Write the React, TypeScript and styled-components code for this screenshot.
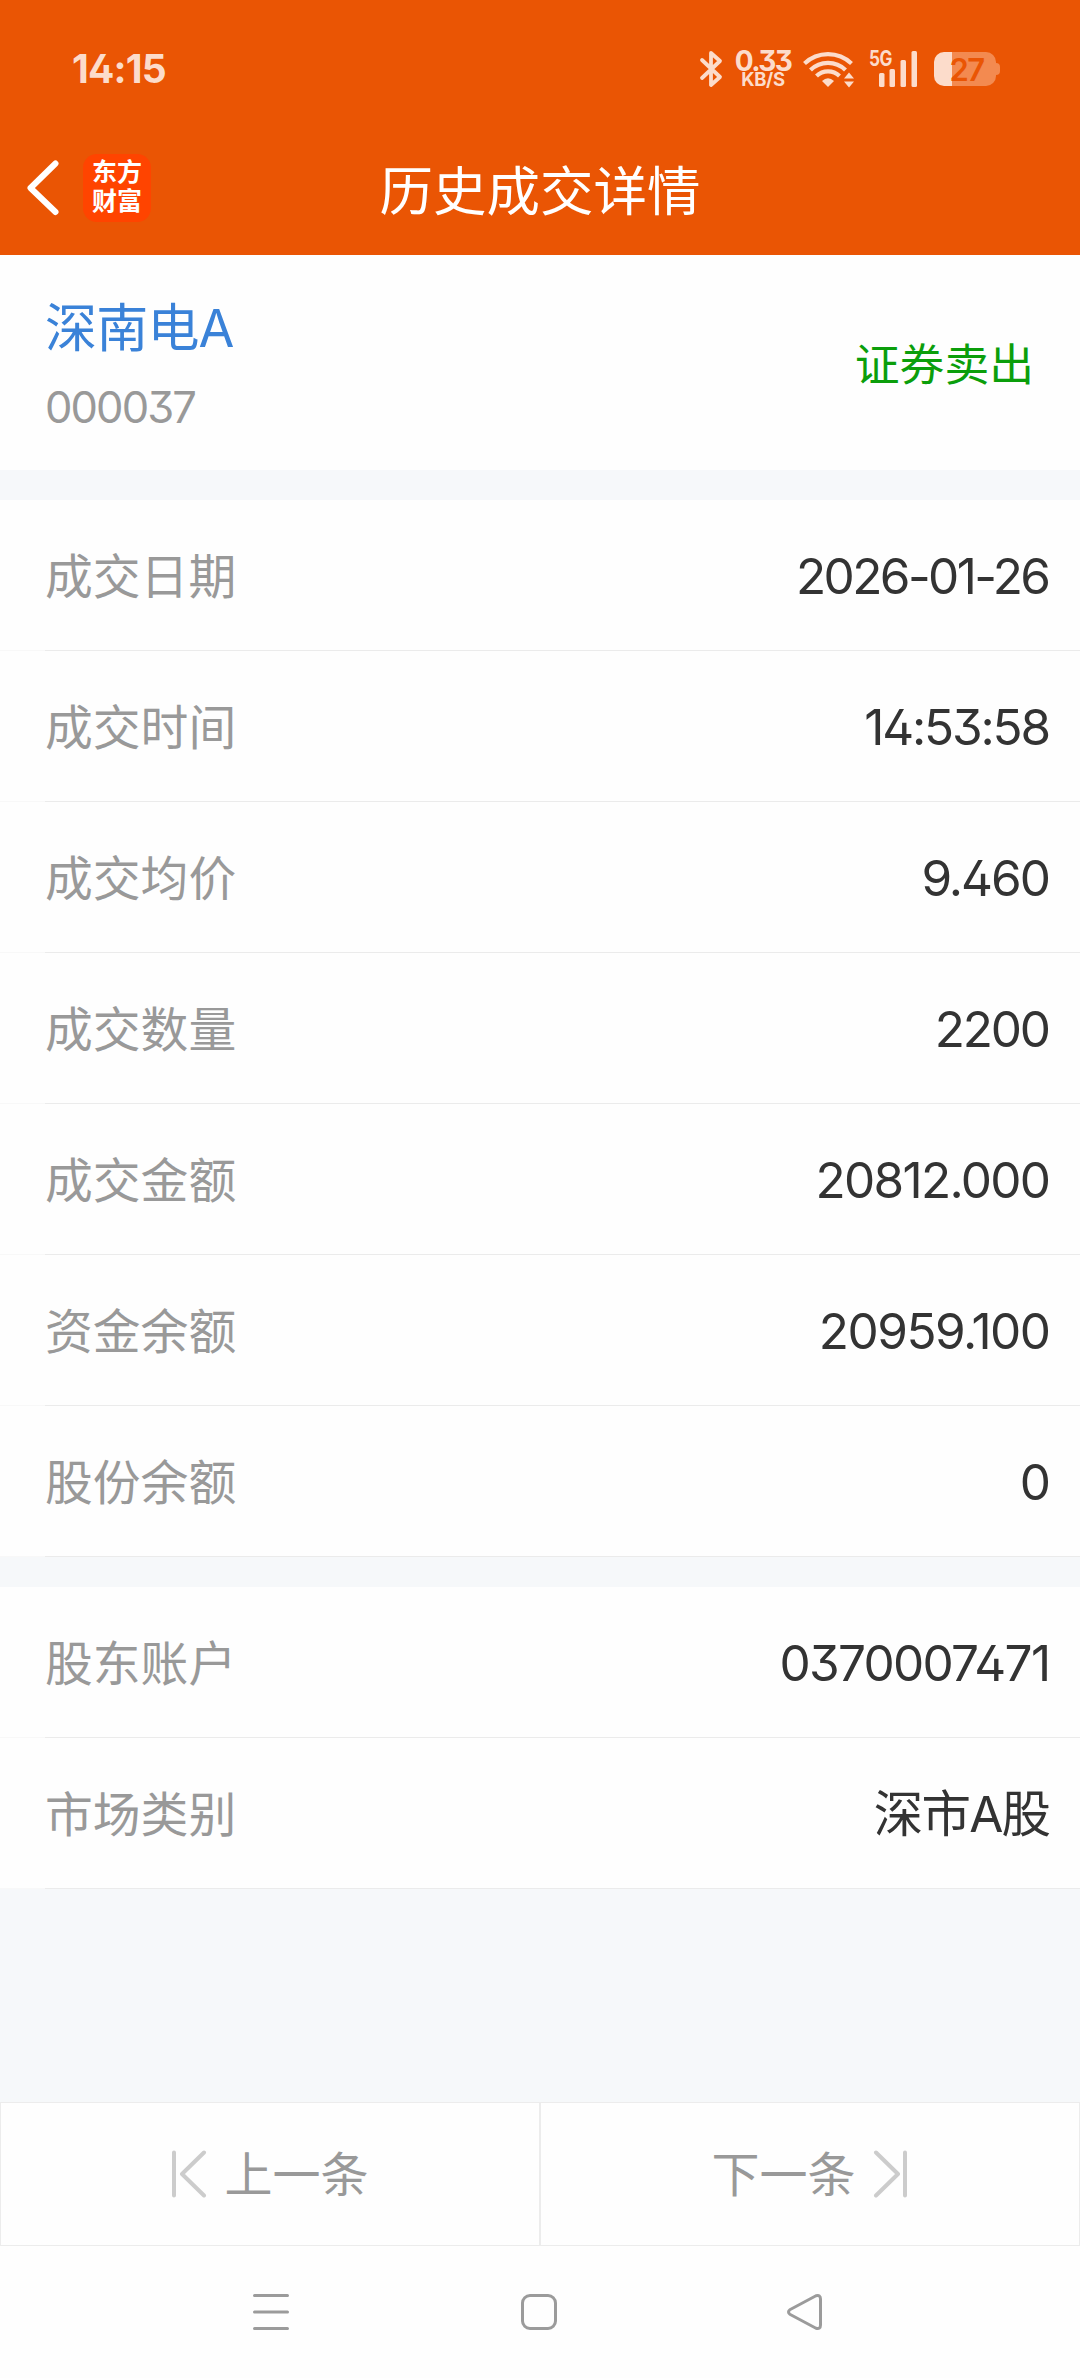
import React from "react";
import styled, { createGlobalStyle } from "styled-components";

const ORANGE = "#ea5504";
const STATUS = "#fcdccb";

const GlobalStyle = createGlobalStyle`
  * { box-sizing: border-box; }
  body {
    margin: 0;
    background: #fdfdfd;
    font-family: Inter, "Noto Sans CJK SC", sans-serif;
    font-feature-settings: "cv02", "cv09";
  }
`;

const Screen = styled.div`
  width: 1080px;
  height: 2378px;
  display: flex;
  flex-direction: column;
  background: #fefefe;
  overflow: hidden;
`;

const Header = styled.header`
  height: 255px;
  flex: none;
  background: ${ORANGE};
`;

const StatusBar = styled.div`
  height: 125px;
  padding: 13px 80px 0 72px;
  display: flex;
  align-items: center;
  justify-content: space-between;
  color: ${STATUS};
`;

const Clock = styled.span`
  font-size: 39px;
  font-weight: 700;
  line-height: 40px;
  letter-spacing: -0.8px;
`;

const StatusIcons = styled.div`
  display: flex;
  align-items: center;
`;

const Speed = styled.div`
  width: 58px;
  margin: 0 11px 0 10px;
  display: flex;
  flex-direction: column;
  align-items: center;
  font-weight: 700;
`;

const SpeedValue = styled.span`
  font-size: 28px;
  line-height: 20px;
  letter-spacing: -1.6px;
`;

const SpeedUnit = styled.span`
  font-size: 18.5px;
  font-weight: 700;
  line-height: 17px;
  letter-spacing: -0.3px;
`;

const Signal = styled.div`
  width: 49px;
  height: 38px;
  margin: 0 16px 0 14px;
  position: relative;
`;

const SignalLabel = styled.span`
  position: absolute;
  left: 0;
  top: 0;
  font-size: 21px;
  font-weight: 700;
  line-height: 17px;
  letter-spacing: -0.5px;
  transform: scaleX(0.82);
  transform-origin: left;
`;

const Battery = styled.div`
  width: 62px;
  height: 34px;
  border-radius: 10px;
  background: linear-gradient(to right, ${STATUS} 18px, #f38a50 18px);
  display: flex;
  align-items: center;
  justify-content: center;
  padding: 2px 0 0 3px;
  color: ${ORANGE};
  font-size: 31px;
  font-weight: 600;
  line-height: 34px;
  letter-spacing: -1.5px;
`;

const BatteryTip = styled.div`
  width: 4px;
  height: 12px;
  border-radius: 0 4px 4px 0;
  background: #f38a50;
`;

const TitleBar = styled.div`
  height: 130px;
  padding: 0 27px;
  display: grid;
  grid-template-columns: 1fr auto 1fr;
  align-items: center;
`;

const BackGroup = styled.div`
  display: flex;
  align-items: center;
  gap: 24px;
  padding-bottom: 5px;
`;

const Logo = styled.div`
  width: 68px;
  height: 68px;
  border-radius: 14px;
  background: #ff4400;
  color: #fff;
  display: flex;
  flex-direction: column;
  align-items: center;
  justify-content: center;
  font-size: 25px;
  font-weight: 700;
  line-height: 29px;
  padding-bottom: 2px;
`;

const Title = styled.h1`
  margin: 3px 0 0;
  color: #fff;
  font-size: 53.5px;
  font-weight: 400;
  line-height: 60px;
`;

const Summary = styled.section`
  height: 215px;
  flex: none;
  padding: 0 46px 0 45px;
  display: flex;
  justify-content: space-between;
`;

const Stock = styled.div`
  padding-top: 42px;
`;

const StockName = styled.div`
  color: #3a82d8;
  font-size: 52px;
  line-height: 64px;
  letter-spacing: -0.8px;
`;

const StockCode = styled.div`
  color: #999;
  font-size: 43.5px;
  line-height: 50px;
  margin-top: 21px;
  letter-spacing: -1.9px;
`;

const Side = styled.div`
  padding-top: 80px;
  color: #0b9e0b;
  font-size: 44.8px;
  line-height: 60px;
`;

const Band = styled.div<{ $fill?: boolean }>`
  flex: ${(p) => (p.$fill ? "1" : "0 0 30px")};
  background: #f6f8fa;
`;

const Row = styled.div`
  height: 151px;
  flex: none;
  padding: 2px 29px 0 45px;
  display: flex;
  align-items: center;
  justify-content: space-between;
  background: linear-gradient(to right, #f8f8f8 45px, #ebebeb 45px) bottom / 100% 1px no-repeat;
`;

const Label = styled.span`
  color: #999;
  font-size: 47.8px;
  line-height: 60px;
`;

const Value = styled.span<{ $spacing: number }>`
  color: #333;
  font-size: 49.5px;
  line-height: 60px;
  letter-spacing: ${(p) => p.$spacing}px;
  margin-right: ${(p) => -p.$spacing}px;
  margin-bottom: 2px;
`;

const Pager = styled.div`
  height: 144px;
  flex: none;
  display: grid;
  grid-template-columns: 1fr 1fr;
`;

const PagerButton = styled.button`
  border: 1px solid #ececec;
  background: none;
  padding: 2px 0 0;
  display: flex;
  align-items: center;
  justify-content: center;
  gap: 17px;
  color: #999;
  font-family: inherit;
  font-size: 48px;
  line-height: 60px;
`;

const PagerIcon = styled.svg`
  margin-bottom: 3px;
`;

const NavBar = styled.nav`
  height: 132px;
  flex: none;
  padding: 0 256px 0 252px;
  display: flex;
  align-items: flex-start;
  justify-content: space-between;
`;

const NavIcon = styled.svg`
  margin-top: 47px;
  fill: none;
  stroke: #9b9b9b;
  stroke-width: 3;
  stroke-linejoin: round;
  stroke-linecap: round;
`;

type Entry = { label: string; value: string; spacing: number };

const trade: Entry[] = [
  { label: "成交日期", value: "2026-01-26", spacing: -2.6 },
  { label: "成交时间", value: "14:53:58", spacing: -2.2 },
  { label: "成交均价", value: "9.460", spacing: -2 },
  { label: "成交数量", value: "2200", spacing: -2.2 },
  { label: "成交金额", value: "20812.000", spacing: -1.7 },
  { label: "资金余额", value: "20959.100", spacing: -1.5 },
  { label: "股份余额", value: "0", spacing: 0 },
];

const account: Entry[] = [
  { label: "股东账户", value: "0370007471", spacing: -1.7 },
  { label: "市场类别", value: "深市A股", spacing: -1.8 },
];

const Rows = ({ items }: { items: Entry[] }) => (
  <>
    {items.map((e) => (
      <Row key={e.label}>
        <Label>{e.label}</Label>
        <Value $spacing={e.spacing}>{e.value}</Value>
      </Row>
    ))}
  </>
);

export default function App() {
  return (
    <Screen>
      <GlobalStyle />
      <Header>
        <StatusBar>
          <Clock>14:15</Clock>
          <StatusIcons>
            <svg width="25" height="38" viewBox="0 0 25 38" fill="none" stroke={STATUS} strokeWidth="3.8" strokeLinejoin="round" strokeLinecap="round">
              <path d="M3 10 L21 27 L12 35 V3 L21 11 L3 28" />
            </svg>
            <Speed>
              <SpeedValue>0.33</SpeedValue>
              <SpeedUnit>KB/S</SpeedUnit>
            </Speed>
            <svg width="52" height="38" viewBox="0 0 52 38" fill="none" stroke={STATUS} strokeWidth="4.2">
              <path d="M1.5 13.5 A34 34 0 0 1 48.5 13.5" />
              <path d="M7.5 20 A25 25 0 0 1 42.5 20" />
              <path d="M13.5 26 A16.5 16.5 0 0 1 36.5 26" />
              <path d="M19 31 Q25 25.5 31 31 L25 37 Z" fill={STATUS} stroke="none" />
              <path d="M41 28.5 L46 22.5 L51 28.5 Z M41 31.5 L46 37.5 L51 31.5 Z" fill={STATUS} stroke="none" />
            </svg>
            <Signal>
              <SignalLabel>5G</SignalLabel>
              <svg width="49" height="38" viewBox="0 0 49 38" fill={STATUS}>
                <rect x="10" y="23" width="5.5" height="14" rx="1.5" />
                <rect x="20.5" y="19" width="5.5" height="18" rx="1.5" />
                <rect x="31.5" y="10" width="5.5" height="27" rx="1.5" />
                <rect x="42.5" y="1" width="5.5" height="36" rx="1.5" />
              </svg>
            </Signal>
            <Battery>27</Battery>
            <BatteryTip />
          </StatusIcons>
        </StatusBar>
        <TitleBar>
          <BackGroup>
            <svg width="32" height="56" viewBox="0 0 32 56" fill="none" stroke="#fff" strokeWidth="6" strokeLinecap="round" strokeLinejoin="round">
              <path d="M28.5 3.5 L3.5 28 L28.5 52" />
            </svg>
            <Logo>
              <span>东方</span>
              <span>财富</span>
            </Logo>
          </BackGroup>
          <Title>历史成交详情</Title>
        </TitleBar>
      </Header>

      <Summary>
        <Stock>
          <StockName>深南电A</StockName>
          <StockCode>000037</StockCode>
        </Stock>
        <Side>证券卖出</Side>
      </Summary>
      <Band />
      <Rows items={trade} />
      <Band />
      <Rows items={account} />
      <Band $fill />

      <Pager>
        <PagerButton>
          <PagerIcon width="36" height="48" viewBox="0 0 36 48" fill="none" stroke="#ccc" strokeWidth="4" strokeLinecap="round" strokeLinejoin="round">
            <path d="M3 2.5 V45.5 M33 2.5 L11 24 L33 45.5" />
          </PagerIcon>
          上一条
        </PagerButton>
        <PagerButton>
          下一条
          <PagerIcon width="36" height="48" viewBox="0 0 36 48" fill="none" stroke="#ccc" strokeWidth="4" strokeLinecap="round" strokeLinejoin="round">
            <path d="M32 2.5 V45.5 M3 2.5 L25 24 L3 45.5" />
          </PagerIcon>
        </PagerButton>
      </Pager>

      <NavBar>
        <NavIcon width="38" height="38" viewBox="0 0 38 38">
          <path d="M2.5 2.5 H35.5 M2.5 19 H35.5 M2.5 35.5 H35.5" />
        </NavIcon>
        <NavIcon width="38" height="38" viewBox="0 0 38 38">
          <rect x="3.5" y="2.5" width="33" height="33" rx="7.5" />
        </NavIcon>
        <NavIcon width="38" height="38" viewBox="0 0 38 38">
          <path d="M3.8 16.8 L30 2.8 Q34.5 1.5 34.5 6 V32 Q34.5 36.5 30 35.2 L3.8 21.2 Q1.2 19 3.8 16.8 Z" />
        </NavIcon>
      </NavBar>
    </Screen>
  );
}
